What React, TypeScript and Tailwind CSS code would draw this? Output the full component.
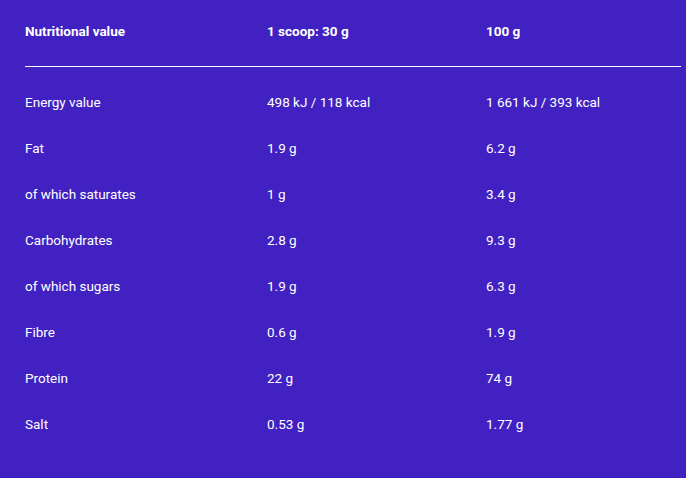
const rows: [string, string, string][] = [
  ['Energy value', '498 kJ / 118 kcal', '1 661 kJ / 393 kcal'],
  ['Fat', '1.9 g', '6.2 g'],
  ['of which saturates', '1 g', '3.4 g'],
  ['Carbohydrates', '2.8 g', '9.3 g'],
  ['of which sugars', '1.9 g', '6.3 g'],
  ['Fibre', '0.6 g', '1.9 g'],
  ['Protein', '22 g', '74 g'],
  ['Salt', '0.53 g', '1.77 g'],
];

export default function App() {
  return (
    <div
      className="h-[478px] w-[686px] bg-[#4121c1] pl-[25px] pr-[5px] text-[13.5px] text-white"
      style={{ fontFamily: 'Roboto, "Liberation Sans", sans-serif' }}
    >
      {/* Header */}
      <div className="flex h-[67px] border-b border-white pt-[22px] font-bold leading-[18px]">
        <div className="w-[242px]">Nutritional value</div>
        <div className="w-[219px]">1 scoop: 30 g</div>
        <div className="flex-1">100 g</div>
      </div>

      <div className="pt-[12px]">
        {rows.map(([name, scoop, hundred]) => (
          <div key={name} className="flex h-[46px] items-center leading-[18px]">
            <div className="w-[242px]">{name}</div>
            <div className="w-[219px]">{scoop}</div>
            <div className="flex-1">{hundred}</div>
          </div>
        ))}
      </div>
    </div>
  );
}
